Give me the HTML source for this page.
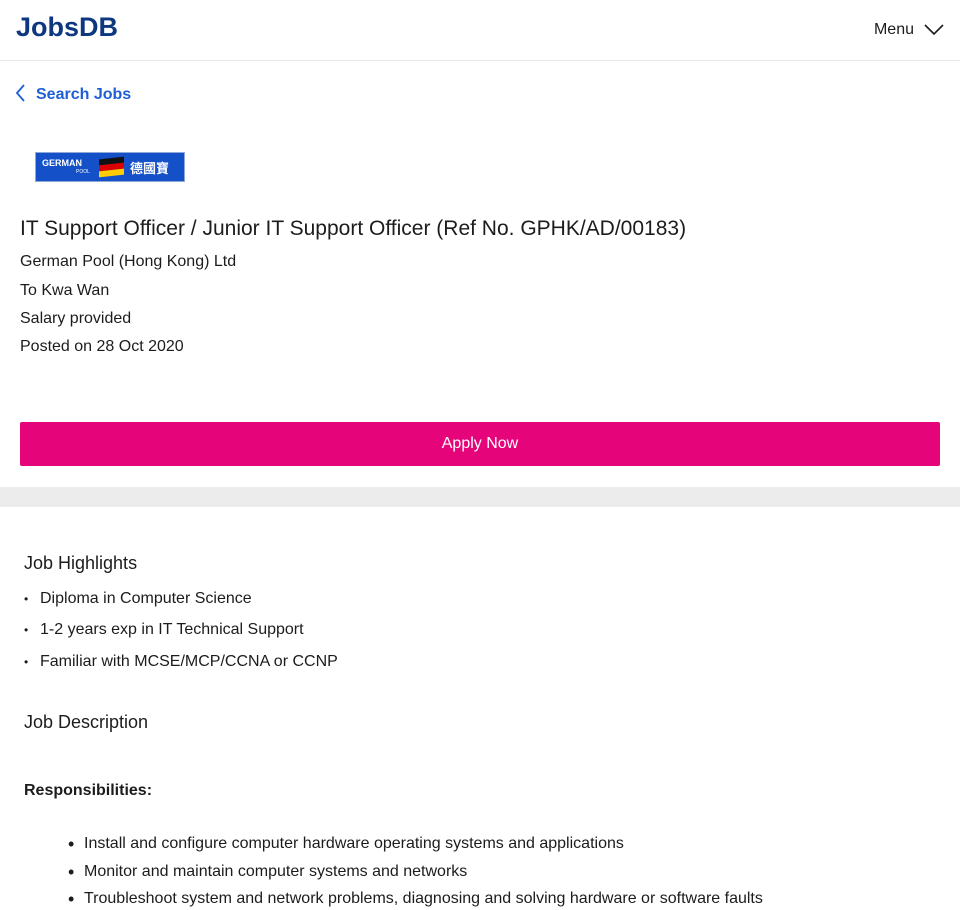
<!DOCTYPE html>
<html><head><meta charset="utf-8">
<style>
*{margin:0;padding:0;box-sizing:border-box}
body{width:960px;height:900px;overflow:hidden;background:#fff;font-family:"Liberation Sans","Noto Sans CJK TC",sans-serif;color:#1c1c1c}
.hdr{height:61px;border-bottom:1px solid #e8e8e8;position:relative}
.logo{position:absolute;left:16px;top:12px;font-size:27px;font-weight:bold;color:#0d3880;letter-spacing:0}
.menu{position:absolute;right:16px;top:21px;font-size:16px;color:#1c1c1c}
.menu svg{vertical-align:-2px;margin-left:10px}
.back{position:absolute;left:16px;top:84px;color:#1f5fd6;font-weight:bold;font-size:16px}
.back svg{vertical-align:-3px;margin-right:10px}
.clogo{position:absolute;left:35px;top:152px;width:150px;height:30px;background:#1450c8;border:1px solid #8fa8d8;color:#fff}
.t{position:absolute;left:20px;font-size:16px}
.apply{position:absolute;left:20px;top:422px;width:920px;height:44px;background:#e5047a;color:#fff;text-align:center;line-height:44px;font-size:16px;border-radius:2px}
.band{position:absolute;left:0;top:487px;width:960px;height:20px;background:#ececec}
.h{position:absolute;left:24px;font-size:18px}
.b{position:absolute;left:24px;font-size:16px}
.b:before{content:"•";position:absolute;left:0;font-size:12px;top:2px}
.b span{margin-left:16px}
.r{position:absolute;left:68px;font-size:16px}
.r:before{content:"•";position:absolute;left:0;font-size:18px;top:-1px}
.r span{margin-left:16px}
</style></head><body>
<div class="hdr">
<div class="logo">JobsDB</div>
<div class="menu">Menu<svg width="20" height="12" viewBox="0 0 20 12"><path d="M1 1L10 10L19 1" fill="none" stroke="#1c1c1c" stroke-width="1.6"/></svg></div>
</div>
<div class="back"><svg width="10" height="18" viewBox="0 0 10 18"><path d="M8 1L1 9L8 17" fill="none" stroke="#1f5fd6" stroke-width="1.8"/></svg>Search Jobs</div>
<div class="clogo">
<div style="position:absolute;left:6px;top:5px;font-size:9px;font-weight:bold">GERMAN</div>
<div style="position:absolute;left:40px;top:16px;font-size:5px">POOL</div>
<div style="position:absolute;left:63px;top:5px;width:25px;height:18px;transform:skewY(-6deg)"><div style="height:6px;background:#111"></div><div style="height:6px;background:#d00"></div><div style="height:6px;background:#fc0"></div></div>
<div style="position:absolute;left:94px;top:5px;font-size:13px;font-weight:bold">德國寶</div>
</div>
<div class="t" style="top:217px;font-size:21px">IT Support Officer / Junior IT Support Officer (Ref No. GPHK/AD/00183)</div>
<div class="t" style="top:253px">German Pool (Hong Kong) Ltd</div>
<div class="t" style="top:282px">To Kwa Wan</div>
<div class="t" style="top:310px">Salary provided</div>
<div class="t" style="top:338px">Posted on 28 Oct 2020</div>
<div class="apply">Apply Now</div>
<div class="band"></div>
<div class="h" style="top:553px">Job Highlights</div>
<div class="b" style="top:590px"><span>Diploma in Computer Science</span></div>
<div class="b" style="top:621px"><span>1-2 years exp in IT Technical Support</span></div>
<div class="b" style="top:653px"><span>Familiar with MCSE/MCP/CCNA or CCNP</span></div>
<div class="h" style="top:712px">Job Description</div>
<div class="t" style="top:782px;left:24px;font-weight:bold">Responsibilities:</div>
<div class="r" style="top:835px"><span>Install and configure computer hardware operating systems and applications</span></div>
<div class="r" style="top:863px"><span>Monitor and maintain computer systems and networks</span></div>
<div class="r" style="top:890px"><span>Troubleshoot system and network problems, diagnosing and solving hardware or software faults</span></div>
</body></html>
